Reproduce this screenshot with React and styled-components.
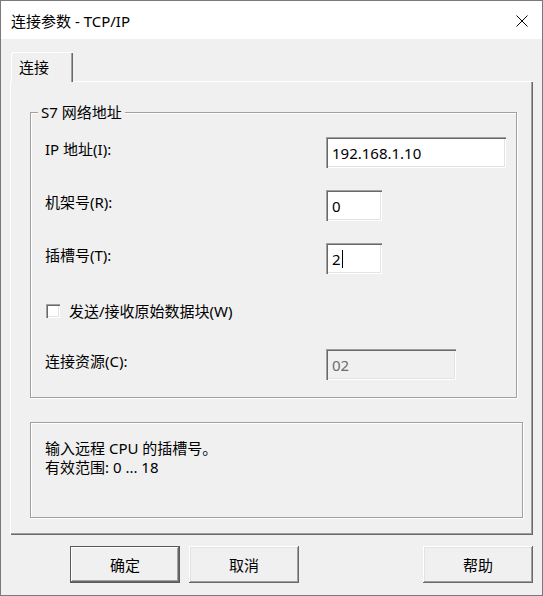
import React from "react";
import styled, { createGlobalStyle } from "styled-components";

const GlobalStyle = createGlobalStyle`
  html, body {
    margin: 0;
    padding: 0;
    background: #ffffff;
  }
  body {
    font-family: "Noto Sans", "Noto Sans CJK SC", sans-serif;
    font-size: 15px;
    color: #000;
  }
  * {
    box-sizing: border-box;
  }
`;

const rows = [
  { label: "IP 地址(I):", value: "192.168.1.10", width: 180 },
  { label: "机架号(R):", value: "0", width: 56 },
  { label: "插槽号(T):", value: "2", width: 56, caret: true },
];

const App = () => {
  return (
    <>
      <GlobalStyle />
      <Window>
        <TitleBar>
          <Title>连接参数 - TCP/IP</Title>
          <CloseButton>
            <svg width="12" height="12" viewBox="0 0 12 12">
              <path d="M0.5 0.5 L11.5 11.5 M11.5 0.5 L0.5 11.5" stroke="#000" strokeWidth="1" />
            </svg>
          </CloseButton>
        </TitleBar>
        <Body>
          <TabStrip>
            <Tab>连接</Tab>
          </TabStrip>
          <Panel>
            <Group>
              <Legend>S7 网络地址</Legend>
              <FormGrid>
                {rows.map((r) => (
                  <React.Fragment key={r.label}>
                    <Label>{r.label}</Label>
                    <Field $width={r.width}>
                      {r.value}
                      {r.caret && <Caret />}
                    </Field>
                  </React.Fragment>
                ))}
                <CheckRow>
                  <CheckBox />
                  <span>发送/接收原始数据块(W)</span>
                </CheckRow>
                <Label>连接资源(C):</Label>
                <Field $width={130} $disabled>
                  02
                </Field>
              </FormGrid>
            </Group>
            <InfoBox>
              <div>输入远程 CPU 的插槽号。</div>
              <div>有效范围: 0 ... 18</div>
            </InfoBox>
          </Panel>
          <ButtonRow>
            <Button $default>确定</Button>
            <Button>取消</Button>
            <Spacer />
            <Button>帮助</Button>
          </ButtonRow>
        </Body>
      </Window>
    </>
  );
};

export default App;

const Window = styled.div`
  width: 543px;
  height: 596px;
  border: 1px solid #7a7a7a;
  background: #f0f0f0;
  display: flex;
  flex-direction: column;
`;

const TitleBar = styled.div`
  height: 38px;
  background: #ffffff;
  display: flex;
  align-items: center;
  justify-content: space-between;
  padding: 0 14px 0 10px;
`;

const Title = styled.div`
  font-size: 15px;
  line-height: 20px;
  margin-top: 1px;
`;

const CloseButton = styled.div`
  width: 12px;
  height: 12px;
  display: flex;
  margin-top: 1px;
`;

const Body = styled.div`
  flex: 1;
  display: flex;
  flex-direction: column;
  padding: 13px 9px 0 9px;
`;

const TabStrip = styled.div`
  display: flex;
  padding-left: 1px;
  position: relative;
  z-index: 1;
`;

const Tab = styled.div`
  width: 62px;
  height: 30px;
  margin-bottom: -1px;
  padding: 5px 0 0 8px;
  line-height: 20px;
  background: #f0f0f0;
  border-top-left-radius: 2px;
  box-shadow: inset 1px 1px #ffffff, inset -1px 0 #696969, inset -2px 0 #a0a0a0;
`;

const Panel = styled.div`
  width: 523px;
  height: 454px;
  padding-top: 31px;
  background: #f0f0f0;
  box-shadow: inset 1px 1px #ffffff, inset -1px -1px #696969,
    inset -2px -2px #a0a0a0;
`;

const Group = styled.div`
  position: relative;
  margin: 0 16px 0 20px;
  height: 286px;
  border: 1px solid #a0a0a0;
  box-shadow: inset 1px 1px #ffffff, 1px 1px #ffffff;
  padding: 24px 0 0 14px;
`;

const Legend = styled.div`
  position: absolute;
  top: -10px;
  left: 7px;
  padding: 0 3px;
  line-height: 18px;
  background: #f0f0f0;
`;

const FormGrid = styled.div`
  display: grid;
  grid-template-columns: 281px auto;
  grid-auto-rows: 31px;
  row-gap: 22px;
  align-items: center;
  justify-items: start;
`;

const Label = styled.div`
  align-self: start;
  margin-top: 2px;
  line-height: 20px;
`;

const Field = styled.div`
  width: ${(p) => p.$width}px;
  height: 31px;
  display: flex;
  align-items: center;
  padding: 1px 0 0 6px;
  line-height: 20px;
  background: ${(p) => (p.$disabled ? "#f0f0f0" : "#ffffff")};
  color: ${(p) => (p.$disabled ? "#6d6d6d" : "#000000")};
  box-shadow: inset 1px 1px #a0a0a0, inset 2px 2px #696969,
    inset -1px -1px #ffffff, inset -2px -2px #e3e3e3;
`;

const Caret = styled.span`
  display: inline-block;
  width: 1px;
  height: 18px;
  margin-left: 1px;
  background: #000;
`;

const CheckRow = styled.div`
  grid-column: 1 / span 2;
  display: flex;
  align-items: center;
  gap: 9px;
  padding-left: 1px;
  margin-top: -2px;
  line-height: 20px;
`;

const CheckBox = styled.span`
  width: 14px;
  height: 14px;
  background: #ffffff;
  box-shadow: inset 1px 1px #a0a0a0, inset 2px 2px #696969,
    inset -1px -1px #ffffff, inset -2px -2px #e3e3e3;
`;

const InfoBox = styled.div`
  margin: 24px 10px 0 20px;
  height: 96px;
  border: 1px solid #a0a0a0;
  box-shadow: inset 1px 1px #ffffff, 1px 1px #ffffff;
  padding: 16px 14px 0 14px;
  line-height: 19px;
`;

const ButtonRow = styled.div`
  display: flex;
  gap: 9px;
  margin-top: 11px;
  padding-left: 60px;
`;

const Spacer = styled.div`
  flex: 1;
`;

const Button = styled.div`
  width: 110px;
  height: 37px;
  display: flex;
  align-items: center;
  justify-content: center;
  line-height: 20px;
  background: #f0f0f0;
  box-shadow: ${(p) =>
    p.$default
      ? "inset 0 0 0 1px #5a5a5a, inset -2px -2px #696969, inset 2px 2px #ffffff, inset -3px -3px #a0a0a0"
      : "inset -1px -1px #696969, inset 1px 1px #ffffff, inset -2px -2px #a0a0a0, inset 2px 2px #e3e3e3"};
`;
